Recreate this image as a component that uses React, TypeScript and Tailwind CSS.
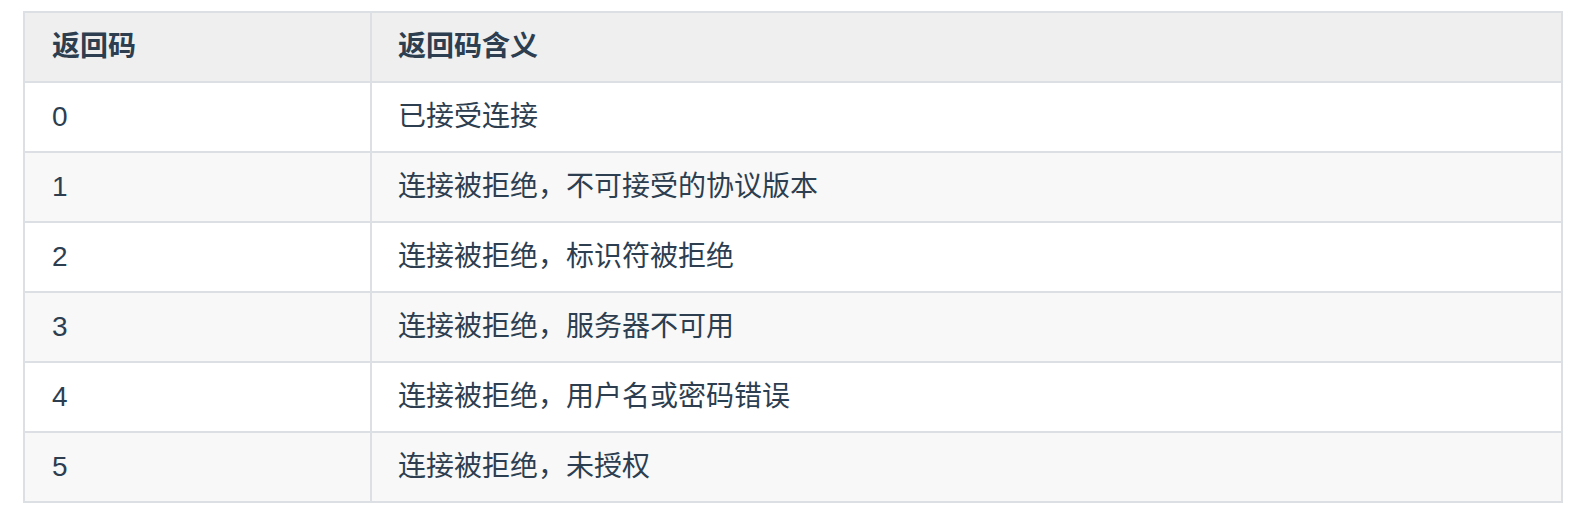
import React from "react";

const rows: [string, string][] = [
  ["0", "已接受连接"],
  ["1", "连接被拒绝，不可接受的协议版本"],
  ["2", "连接被拒绝，标识符被拒绝"],
  ["3", "连接被拒绝，服务器不可用"],
  ["4", "连接被拒绝，用户名或密码错误"],
  ["5", "连接被拒绝，未授权"],
];

export default function App() {
  return (
    <div
      className="w-[1576px] h-[514px] bg-white pt-[11px] pl-[23px] text-[#2c3e50] text-[28px]"
      style={{ fontFamily: '"Liberation Sans", "Noto Sans CJK SC", sans-serif' }}
    >
      <table className="w-[1540px] border-separate border-spacing-0 border-l-2 border-t-2 border-[#dcdfe3] table-fixed">
        <colgroup>
          <col className="w-[347px]" />
          <col className="w-[1191px]" />
        </colgroup>
        <thead>
          <tr className="bg-[#efefef]">
            <th className="h-[70px] text-left font-bold pl-[27px] border-r-2 border-b-2 border-[#dcdfe3] leading-none">
              返回码
            </th>
            <th className="h-[70px] text-left font-bold pl-[26px] border-r-2 border-b-2 border-[#dcdfe3] leading-none">
              返回码含义
            </th>
          </tr>
        </thead>
        <tbody>
          {rows.map(([code, desc], i) => (
            <tr key={code} className={i % 2 === 1 ? "bg-[#f8f8f8]" : "bg-white"}>
              <td className="h-[70px] pl-[27px] border-r-2 border-b-2 border-[#dcdfe3] leading-none">
                {code}
              </td>
              <td className="h-[70px] pl-[26px] border-r-2 border-b-2 border-[#dcdfe3] leading-none">
                {desc}
              </td>
            </tr>
          ))}
        </tbody>
      </table>
    </div>
  );
}
